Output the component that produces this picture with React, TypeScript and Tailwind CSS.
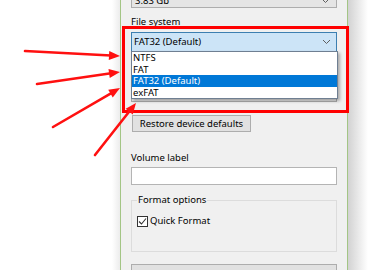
import React from "react";

const ARROWS = [
  { x1: 25, y1: 51, x2: 120, y2: 56 },
  { x1: 37, y1: 84, x2: 120, y2: 72 },
  { x1: 53, y1: 127, x2: 120, y2: 88 },
  { x1: 95, y1: 155, x2: 136, y2: 103 },
];

const FS_OPTIONS = ["NTFS", "FAT", "FAT32 (Default)", "exFAT"];

function Chevron() {
  return (
    <svg width="9" height="6" viewBox="0 0 9 6" className="shrink-0">
      <path d="M1 1 L4.5 4.5 L8 1" fill="none" stroke="#5f5f5f" strokeWidth="1" />
    </svg>
  );
}

function Arrow({ x1, y1, x2, y2 }: { x1: number; y1: number; x2: number; y2: number }) {
  // arrowhead triangle computed from the line direction
  const dx = x2 - x1;
  const dy = y2 - y1;
  const len = Math.hypot(dx, dy);
  const ux = dx / len;
  const uy = dy / len;
  const hl = 11;
  const hw = 4.5;
  const bx = x2 - ux * hl;
  const by = y2 - uy * hl;
  const pts = `${x2},${y2} ${bx - uy * hw},${by + ux * hw} ${bx + uy * hw},${by - ux * hw}`;
  return (
    <g>
      <line x1={x1} y1={y1} x2={bx + ux * 2} y2={by + uy * 2} stroke="#ff1010" strokeWidth="2.6" strokeLinecap="round" />
      <polygon points={pts} fill="#ff1010" />
    </g>
  );
}

export default function App() {
  return (
    <div
      className="relative w-[373px] h-[270px] overflow-hidden bg-white flex text-black text-[9.5px] leading-[12px]"
      style={{ fontFamily: '"Noto Sans", "Liberation Sans", sans-serif' }}
    >
      <div className="w-[112px] shrink-0" />
      <div className="w-[8px] shrink-0 bg-gradient-to-r from-white to-[#ececec]" />

      {/* Dialog */}
      <div className="relative w-[228px] shrink-0 h-full bg-[#f0f0f0] border-x border-[#a3c585] px-[10px]">
        {/* capacity combobox, cut off at the top */}
        <div className="mt-[-12px] h-[20px] border border-[#adadad] bg-[#e5e5e5] flex items-center justify-between pl-[3px] pr-[6px] pt-[6px]">
          <span>3.83 Gb</span>
          <Chevron />
        </div>

        <div className="mt-[8px] h-[12px]">File system</div>
        <div className="mt-[4px] h-[20px] border border-[#3c7fb1] bg-[#cce4f7] flex items-center justify-between pl-[2px] pr-[5px]">
          <span>FAT32 (Default)</span>
          <Chevron />
        </div>

        {/* allocation unit size row, hidden under the open list */}
        <div className="mt-[30px] h-[20px] border border-[#adadad] bg-[#e5e5e5]" />

        <button className="block mt-[13px] ml-[1px] w-[119px] h-[17px] border border-[#adadad] bg-[#e1e1e1] text-center">
          Restore device defaults
        </button>

        <div className="mt-[20px] h-[12px]">Volume label</div>
        <div className="mt-[3px] h-[18px] border border-[#b4b4b4] bg-white" />

        <fieldset className="mt-[9px] h-[58px] border border-[#dcdcdc] pl-[5px]">
          <legend className="px-[1px]">Format options</legend>
          <label className="mt-[9px] flex items-center gap-[2px]">
            <span className="w-[11px] h-[11px] border border-[#333333] bg-white flex items-center justify-center">
              <svg width="9" height="9" viewBox="0 0 9 9">
                <path d="M1 4.5 L3.5 7 L8 1.5" fill="none" stroke="#333333" strokeWidth="1.1" />
              </svg>
            </span>
            <span>Quick Format</span>
          </label>
        </fieldset>

        <div className="mt-[12px] h-[20px] border border-[#adadad] bg-[#e1e1e1]" />

        {/* open dropdown list */}
        <div className="absolute left-[10px] top-[51px] w-[207px] border border-[#6f7f92] bg-white shadow-[2px_2px_3px_rgba(0,0,0,0.3)]">
          {FS_OPTIONS.map(opt => (
            <div
              key={opt}
              className={`h-[11.5px] leading-[11.5px] pl-[1px] ${opt === "FAT32 (Default)" ? "bg-[#0078d7] text-white" : ""}`}
            >
              {opt}
            </div>
          ))}
        </div>
      </div>

      <div className="w-[20px] shrink-0 bg-gradient-to-r from-[#d2d2d2] to-white" />

      {/* annotation */}
      <div className="absolute left-[122px] top-[26px] w-[227px] h-[87px] border-[3px] border-[#ff0000]" />
      <svg className="absolute inset-0 pointer-events-none" width="373" height="270">
        {ARROWS.map((a, i) => (
          <Arrow key={i} {...a} />
        ))}
      </svg>
    </div>
  );
}
